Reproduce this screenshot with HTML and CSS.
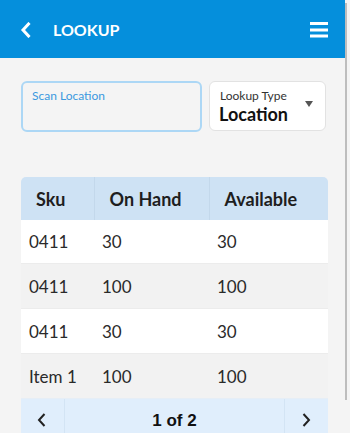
FILE: index.html
```html
<!DOCTYPE html>
<html lang="en">
<head>
    <meta charset="UTF-8">
    <meta name="viewport" content="width=device-width, initial-scale=1.0">
    <title>Lookup</title>
    <link rel="stylesheet" href="styles.css">
</head>
<body>

    <div class="app">
        <header class="topbar">
            <button class="icon-btn back" aria-label="Back">
                <svg width="12" height="16" viewBox="0 0 12 16" fill="none" xmlns="http://www.w3.org/2000/svg">
                    <path d="M8.5 2 L3 8 L8.5 14" stroke="#fff" stroke-width="3" stroke-linecap="square" stroke-linejoin="miter" />
                </svg>
            </button>
            <h1 class="title">LOOKUP</h1>
            <button class="icon-btn menu" aria-label="Menu">
                <svg width="18" height="16" viewBox="0 0 18 16" xmlns="http://www.w3.org/2000/svg">
                    <rect x="0" y="0" width="18" height="3" fill="#fff" />
                    <rect x="0" y="6.5" width="18" height="3" fill="#fff" />
                    <rect x="0" y="12.5" width="18" height="3" fill="#fff" />
                </svg>
            </button>
        </header>

        <main class="content">
            <div class="filters">
                <label class="field scan">
                    <span class="field-label">Scan Location</span>
                    <input type="text" class="field-input">
                </label>
                <div class="field lookup-type">
                    <div class="select-text">
                        <span class="select-label">Lookup Type</span>
                        <span class="select-value">Location</span>
                    </div>
                    <span class="caret"></span>
                </div>
            </div>

            <div class="grid-card">
                <table class="grid">
                    <colgroup>
                        <col class="col-sku">
                        <col class="col-hand">
                        <col>
                    </colgroup>
                    <thead>
                        <tr>
                            <th>Sku</th>
                            <th>On Hand</th>
                            <th>Available</th>
                        </tr>
                    </thead>
                    <tbody>
                        <tr><td>0411</td><td>30</td><td>30</td></tr>
                        <tr><td>0411</td><td>100</td><td>100</td></tr>
                        <tr><td>0411</td><td>30</td><td>30</td></tr>
                        <tr><td>Item 1</td><td>100</td><td>100</td></tr>
                    </tbody>
                </table>
                <div class="pager">
                    <button class="pager-btn prev" aria-label="Previous">
                        <svg width="10" height="16" viewBox="0 0 10 16" fill="none" xmlns="http://www.w3.org/2000/svg">
                            <path d="M7.5 2 L2 8 L7.5 14" stroke="#222" stroke-width="2" />
                        </svg>
                    </button>
                    <span class="pager-info">1 of 2</span>
                    <button class="pager-btn next" aria-label="Next">
                        <svg width="10" height="16" viewBox="0 0 10 16" fill="none" xmlns="http://www.w3.org/2000/svg">
                            <path d="M2.5 2 L8 8 L2.5 14" stroke="#222" stroke-width="2" />
                        </svg>
                    </button>
                </div>
            </div>
        </main>
    </div>

    <!-- scroll indicator -->
    <div class="scroll-thumb"></div>

</body>
</html>
```

FILE: styles.css
```css
html { background: #f4f4f4; }
body {
    margin: 0;
    font-family: Lato, "Open Sans", sans-serif;
    color: #222;
    background: #f4f4f4;
}

.app {
    width: 345px;
}

.scroll-thumb {
    position: fixed;
    top: 3px;
    right: 3px;
    width: 2px;
    height: 397px;
    background: #bdbdbd;
}

.topbar {
    height: 58px;
    background-color: #058fdc;
    display: flex;
    align-items: center;
    padding: 0 17px 0 20px;
}

.icon-btn {
    background: none;
    border: 0;
    padding: 0;
    display: flex;
    cursor: pointer;
}

.back { margin-top: 2px; }

.title {
    margin: 0 0 0 21px;
    flex: 1;
    color: #fff;
    font-size: 16px;
    font-weight: 700;
}

.menu { margin-top: 1px; }

.content {
    padding: 23px 17px 38px 21px;
}

.filters {
    display: flex;
    gap: 7px;
    margin-right: 2px;
}

.field {
    box-sizing: border-box;
    height: 51px;
    border-radius: 6px;
}

.scan {
    width: 181px;
    border: 2px solid #acd7f5;
    padding: 5px 9px 0;
    display: flex;
    flex-direction: column;
}

.field-label {
    font-size: 12px;
    color: #3b99df;
}

.field-input {
    border: 0;
    background: transparent;
    outline: none;
    padding: 0;
    font: inherit;
}

.lookup-type {
    flex: 1;
    height: 50px;
    background: #fff;
    border: 1px solid #e2e2e2;
    padding: 7px 12px 0 9px;
    display: flex;
    align-items: flex-start;
    justify-content: space-between;
}

.select-text {
    display: flex;
    flex-direction: column;
}

.select-label {
    font-size: 12px;
    color: #333;
    line-height: 14px;
    margin-left: 1px;
}

.select-value {
    font-size: 18px;
    font-weight: 700;
    color: #111;
    line-height: 22px;
}

.caret {
    margin-top: 12px;
    width: 0;
    height: 0;
    border-left: 4.5px solid transparent;
    border-right: 4.5px solid transparent;
    border-top: 6px solid #555;
}

.grid-card {
    margin-top: 45px;
    border-radius: 5px 5px 0 0;
    overflow: hidden;
}

.grid {
    width: 100%;
    border-collapse: collapse;
    table-layout: fixed;
}

.col-sku { width: 73px; }
.col-hand { width: 115px; }

.grid th {
    height: 43px;
    padding: 0 0 0 15px;
    background: #cee2f4;
    text-align: left;
    font-size: 18px;
    font-weight: 700;
    color: #1e1e1e;
    border-left: 1px solid #c3d8eb;
}

.grid th:first-child { border-left: 0; }

.grid td {
    height: 44px;
    padding: 0 0 0 8px;
    font-size: 17px;
    color: #2a2a2a;
    background: #fff;
    border-top: 1px solid #ececec;
}

.grid tbody tr:first-child td { border-top: 0; height: 43px; }

.grid tbody tr:nth-child(even) td { background: #f2f2f2; }

.pager {
    height: 35px;
    background: #e0eefc;
    display: flex;
    align-items: center;
    padding-top: 9px;
    box-sizing: border-box;
    border-top: 1px solid #e6eef6;
}

.pager-btn {
    width: 44px;
    align-self: stretch;
    margin-top: -9px;
    padding-top: 9px;
    background: none;
    border: 0;
    display: flex;
    align-items: center;
    justify-content: center;
    cursor: pointer;
}

.prev {
    border-right: 1px solid #d3e4f4;
    padding-right: 8px;
}

.next {
    border-left: 1px solid #d3e4f4;
    padding-left: 4px;
}

.pager-info {
    flex: 1;
    text-align: center;
    font-family: "Liberation Sans", Arial, sans-serif;
    font-weight: 700;
    font-size: 17px;
    color: #111;
}
```
